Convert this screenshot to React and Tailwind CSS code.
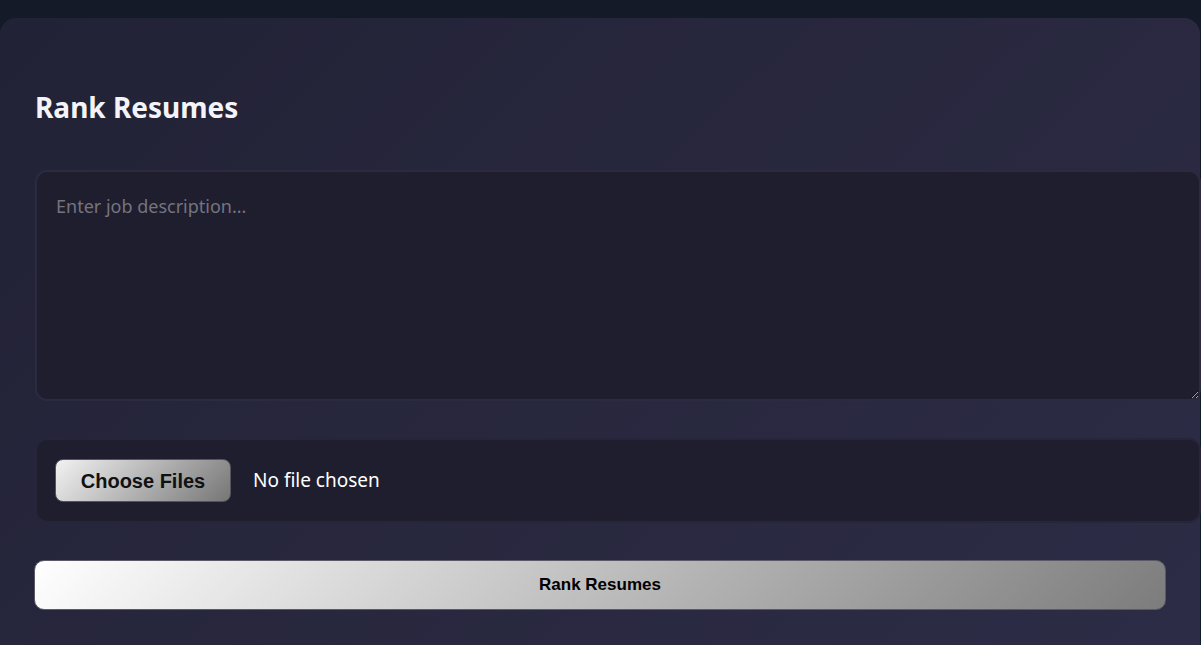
import React, { useState } from 'react';

export default function App() {
  const [jobDescription, setJobDescription] = useState('');

  return (
    <div className="min-h-[645px] w-[1201px] overflow-hidden bg-gradient-to-b from-[#141a28] to-[#12202c] pt-[18px] font-['Noto_Sans',sans-serif]">
      {/* Main card */}
      <div className="min-h-[640px] w-[1200px] rounded-2xl bg-[linear-gradient(135deg,#222236,#2d2c46)] px-[35px] pt-[71px] pb-10 shadow-lg">
        <h2 className="mb-[45px] text-[28px] font-bold leading-[36px] text-[#f4f4f8]">Rank Resumes</h2>

        {/* Job description */}
        <textarea
          value={jobDescription}
          onChange={(e) => setJobDescription(e.target.value)}
          placeholder="Enter job description..."
          className="block h-[231px] w-[1166px] rounded-xl border-2 border-[#2b2a40] bg-[#1f1e2e] px-[19px] py-[22px] text-[18px] leading-[24px] text-white outline-none placeholder:text-[#75747e]"
        />

        {/* File picker */}
        <div className="mt-[37px] flex h-[85px] w-[1166px] items-center gap-[22px] rounded-xl border-2 border-[#26253a] bg-[#1f1e2e] px-[18px]">
          <label className="flex h-[43px] w-[176px] cursor-pointer items-center justify-center rounded-lg border border-[#55555f] bg-[linear-gradient(135deg,#f2f2f2,#767676)] font-['Liberation_Sans',sans-serif] text-[20px] font-bold text-[#111]">
            Choose Files
            <input type="file" multiple className="hidden" />
          </label>
          <span className="text-[19px] text-white">No file chosen</span>
        </div>

        {/* Submit */}
        <button className="-ml-px mt-[37px] flex h-[50px] w-[1132px] items-center justify-center rounded-[10px] border border-[#5a5a66] bg-[linear-gradient(135deg,#ffffff,#7c7c7c)] font-['Liberation_Sans',sans-serif] text-[17px] font-bold text-black">
          Rank Resumes
        </button>
      </div>
    </div>
  );
}
